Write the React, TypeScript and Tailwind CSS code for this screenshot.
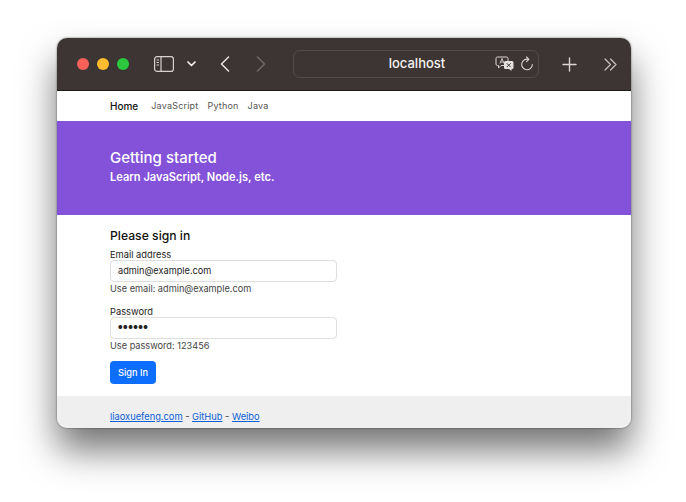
import React from "react";

const font = { fontFamily: "Inter, 'Liberation Sans', sans-serif" };

function TitleBar() {
  return (
    <div className="flex h-[53px] items-center border-b border-[#1d1a19] bg-[#3d3533] pl-[20px]">
      <div className="flex gap-[8px]">
        <span className="h-[12px] w-[12px] rounded-full bg-[#f9605a]" />
        <span className="h-[12px] w-[12px] rounded-full bg-[#fcbc2e]" />
        <span className="h-[12px] w-[12px] rounded-full bg-[#2cc840]" />
      </div>
      <svg className="ml-[25px]" width="20" height="16" viewBox="0 0 20 16" fill="none" stroke="#d6d2d0" strokeWidth="1.2">
        <rect x="0.6" y="0.6" width="18.8" height="14.8" rx="2.5" />
        <path d="M7 0.6V15.4" />
        <path d="M2.5 4h2.5M2.5 6.5h2.5M2.5 9h2.5" strokeWidth="1" />
      </svg>
      <svg className="ml-[13px]" width="9" height="6" viewBox="0 0 9 6" fill="none" stroke="#f2f0ef" strokeWidth="1.7" strokeLinecap="round" strokeLinejoin="round">
        <path d="M1 1l3.5 3.5L8 1" />
      </svg>
      <svg className="ml-[24px]" width="10" height="16" viewBox="0 0 10 16" fill="none" stroke="#e6e3e2" strokeWidth="1.5" strokeLinecap="round" strokeLinejoin="round">
        <path d="M8.5 1L1.5 8l7 7" />
      </svg>
      <svg className="ml-[26px]" width="10" height="16" viewBox="0 0 10 16" fill="none" stroke="#6f6866" strokeWidth="1.5" strokeLinecap="round" strokeLinejoin="round">
        <path d="M1.5 1l7 7-7 7" />
      </svg>
      <div className="relative ml-[27px] flex h-[28px] w-[246px] items-center justify-center rounded-[7px] border border-[#544c4a] bg-[#3d3533]">
        <span className="ml-[2px] text-[13px] font-medium text-[#f5f3f2]">localhost</span>
        <svg className="absolute left-[201px] top-[5px]" width="20" height="16" viewBox="0 0 20 16">
          <path d="M2.5 1h9a1.5 1.5 0 0 1 1.5 1.5V8a1.5 1.5 0 0 1-1.5 1.5H6L3.5 12V9.5h-1A1.5 1.5 0 0 1 1 8V2.5A1.5 1.5 0 0 1 2.5 1z" fill="#3d3533" stroke="#d8d5d3" strokeWidth="1" />
          <path d="M5 7.5l2-5 2 5M5.8 6h2.4" fill="none" stroke="#d8d5d3" strokeWidth="0.9" />
          <path d="M10.5 5h6.5a1.5 1.5 0 0 1 1.5 1.5v5a1.5 1.5 0 0 1-1.5 1.5h-.5v2L14 13h-3.5A1.5 1.5 0 0 1 9 11.5v-5A1.5 1.5 0 0 1 10.5 5z" fill="#e4e1df" />
          <path d="M11.8 7.3l3.8 3.8M15.6 7.3l-3.8 3.8" stroke="#3d3533" strokeWidth="1" />
        </svg>
        <svg className="absolute left-[226px] top-[5px]" width="14" height="16" viewBox="0 0 14 16" fill="none" stroke="#d8d5d3" strokeWidth="1.1" strokeLinecap="round" strokeLinejoin="round">
          <path d="M8.5 3.4A5.3 5.3 0 1 0 12.3 8.5" />
          <path d="M6.5 1l2.4 2.4L6.5 5.6" />
        </svg>
      </div>
      <svg className="ml-[23px]" width="15" height="15" viewBox="0 0 15 15" fill="none" stroke="#d8d5d3" strokeWidth="1.4" strokeLinecap="round">
        <path d="M7.5 1v13M1 7.5h13" />
      </svg>
      <svg className="ml-[27px]" width="13" height="13" viewBox="0 0 13 13" fill="none" stroke="#c9c5c3" strokeWidth="1.2" strokeLinecap="round" strokeLinejoin="round">
        <path d="M1 1l5.5 5.5L1 12M6.5 1L12 6.5 6.5 12" />
      </svg>
    </div>
  );
}

function Nav() {
  return (
    <nav className="flex h-[30px] items-center gap-[9px] bg-white pl-[53px] text-[9px] tracking-[0.2px] text-[#555]">
      <span className="mr-[4px] text-[10px] font-medium tracking-normal text-[#111]">Home</span>
      <span>JavaScript</span>
      <span>Python</span>
      <span>Java</span>
    </nav>
  );
}

function Hero() {
  return (
    <div className="flex h-[94px] flex-col bg-[#8451d9] pl-[53px] pt-[27px] text-white">
      <div className="text-[15px] leading-[19px] font-medium">Getting started</div>
      <div className="mt-[2px] text-[11.1px] leading-[16px] font-semibold">Learn JavaScript, Node.js, etc.</div>
    </div>
  );
}

function Field({ label, value, hint, dots }: { label: string; value: string; hint: string; dots?: boolean }) {
  return (
    <div className="mb-[9px] flex w-[227px] flex-col">
      <label className="text-[9.3px] leading-[13px] text-[#222]">{label}</label>
      <div className={`mt-[-1px] flex h-[22px] items-center rounded-[4px] border border-[#dedede] bg-white pl-[7px] text-[#222] ${dots ? "text-[5px] tracking-[0.5px]" : "text-[9.2px]"}`}>
        {value}
      </div>
      <div className="text-[9.2px] leading-[14px] text-[#444]">{hint}</div>
    </div>
  );
}

export default function App() {
  return (
    <div className="h-[502px] w-[686px] overflow-hidden bg-white pl-[57px] pt-[38px]" style={font}>
      <div className="flex h-[390px] w-[574px] flex-col overflow-hidden rounded-[10px] shadow-[0_0_2px_rgba(0,0,0,0.6),0_22px_36px_rgba(0,0,0,0.55)]">
        <TitleBar />
        <Nav />
        <Hero />
        <main className="flex h-[181px] flex-col bg-white pl-[53px] pt-[13px]">
          <h1 className="mb-[5px] text-[12.2px] leading-[15px] font-medium text-[#111]">Please sign in</h1>
          <Field label="Email address" value="admin@example.com" hint="Use email: admin@example.com" />
          <Field label="Password" value="●●●●●●" hint="Use password: 123456" dots />
          <button className="mt-[-1px] h-[23px] w-[46px] rounded-[4px] bg-[#0d6efd] text-[9.2px] font-medium text-white">Sign In</button>
        </main>
        <footer className="flex flex-1 items-end bg-[#efefef] pb-[5px] pl-[53px] text-[9.3px] leading-[13px] text-[#333]">
          <span>
            <a className="text-[#0d5fd8] underline">liaoxuefeng.com</a> - <a className="text-[#0d5fd8] underline">GitHub</a> - <a className="text-[#0d5fd8] underline">Weibo</a>
          </span>
        </footer>
      </div>
    </div>
  );
}
